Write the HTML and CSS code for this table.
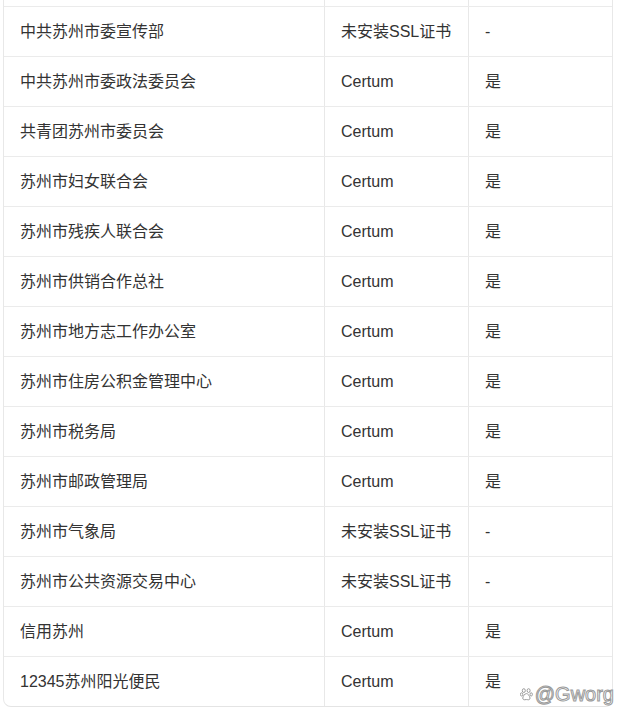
FILE: index.html
```html
<!DOCTYPE html>
<html lang="zh-CN">
<head>
<meta charset="utf-8">
<title>Table</title>
<link rel="stylesheet" href="styles.css">
</head>
<body>
<div class="page">
  <div class="table">
    <div class="row row-partial"><div class="cell c1"></div><div class="cell c2"></div><div class="cell c3"></div></div>
    <div class="row"><div class="cell c1">中共苏州市委宣传部</div><div class="cell c2">未安装SSL证书</div><div class="cell c3">-</div></div>
    <div class="row"><div class="cell c1">中共苏州市委政法委员会</div><div class="cell c2">Certum</div><div class="cell c3">是</div></div>
    <div class="row"><div class="cell c1">共青团苏州市委员会</div><div class="cell c2">Certum</div><div class="cell c3">是</div></div>
    <div class="row"><div class="cell c1">苏州市妇女联合会</div><div class="cell c2">Certum</div><div class="cell c3">是</div></div>
    <div class="row"><div class="cell c1">苏州市残疾人联合会</div><div class="cell c2">Certum</div><div class="cell c3">是</div></div>
    <div class="row"><div class="cell c1">苏州市供销合作总社</div><div class="cell c2">Certum</div><div class="cell c3">是</div></div>
    <div class="row"><div class="cell c1">苏州市地方志工作办公室</div><div class="cell c2">Certum</div><div class="cell c3">是</div></div>
    <div class="row"><div class="cell c1">苏州市住房公积金管理中心</div><div class="cell c2">Certum</div><div class="cell c3">是</div></div>
    <div class="row"><div class="cell c1">苏州市税务局</div><div class="cell c2">Certum</div><div class="cell c3">是</div></div>
    <div class="row"><div class="cell c1">苏州市邮政管理局</div><div class="cell c2">Certum</div><div class="cell c3">是</div></div>
    <div class="row"><div class="cell c1">苏州市气象局</div><div class="cell c2">未安装SSL证书</div><div class="cell c3">-</div></div>
    <div class="row"><div class="cell c1">苏州市公共资源交易中心</div><div class="cell c2">未安装SSL证书</div><div class="cell c3">-</div></div>
    <div class="row"><div class="cell c1">信用苏州</div><div class="cell c2">Certum</div><div class="cell c3">是</div></div>
    <div class="row row-last"><div class="cell c1">12345苏州阳光便民</div><div class="cell c2">Certum</div><div class="cell c3">是</div></div>
  </div>
  <div class="watermark">
    <svg class="paw" width="13" height="13" viewBox="0 0 13 13" aria-hidden="true">
      <g fill="#fff" stroke="#9a9a9a" stroke-width="1">
        <ellipse cx="3.8" cy="2.6" rx="1.5" ry="1.9"/>
        <ellipse cx="8.6" cy="2.6" rx="1.5" ry="1.9"/>
        <ellipse cx="1.6" cy="6.4" rx="1.2" ry="1.6"/>
        <ellipse cx="11.2" cy="6.4" rx="1.2" ry="1.6"/>
        <path d="M6.4 5.6 C4.6 5.6 3 8.2 2.8 10 C2.7 11.6 4 12 5 11.7 C5.8 11.5 7 11.5 7.8 11.7 C8.8 12 10.1 11.6 10 10 C9.8 8.2 8.2 5.6 6.4 5.6 Z"/>
      </g>
    </svg>
    <span class="wm-text">@Gworg</span>
  </div>
</div>
</body>
</html>
```

FILE: styles.css
```css
html, body {
  margin: 0;
  padding: 0;
  background: #ffffff;
}

.page {
  position: relative;
  width: 623px;
  height: 717px;
  overflow: hidden;
}

.table {
  margin-left: 3px;
  width: 610px;
  box-sizing: border-box;
  border-left: 1px solid #e8e8e8;
  border-right: 1px solid #e8e8e8;
  border-bottom: 1px solid #e4e4e4;
  border-radius: 0 0 8px 8px;
  font-family: "Liberation Sans", "Noto Sans CJK SC", Arial, sans-serif;
  font-size: 16px;
  line-height: 20px;
  color: #333333;
}

.row {
  display: grid;
  grid-template-columns: 321px 144px 1fr;
  height: 50px;
  box-sizing: border-box;
  border-bottom: 1px solid #ebebeb;
}

.row-partial {
  height: 7px;
}

.row-last {
  height: 49px;
  border-bottom: none;
}

.cell {
  display: flex;
  align-items: center;
  padding: 0 16px;
  box-sizing: border-box;
  white-space: nowrap;
}

.c1, .c2 {
  border-right: 1px solid #e8e8e8;
}

.watermark {
  position: absolute;
  right: 9px;
  top: 683px;
  display: flex;
  align-items: center;
  gap: 2px;
}

.paw {
  display: block;
}

.wm-text {
  font-family: "Liberation Sans", Arial, sans-serif;
  font-size: 20px;
  line-height: 22px;
  color: #ffffff;
  -webkit-text-stroke: 1px #9a9a9a;
}
```
